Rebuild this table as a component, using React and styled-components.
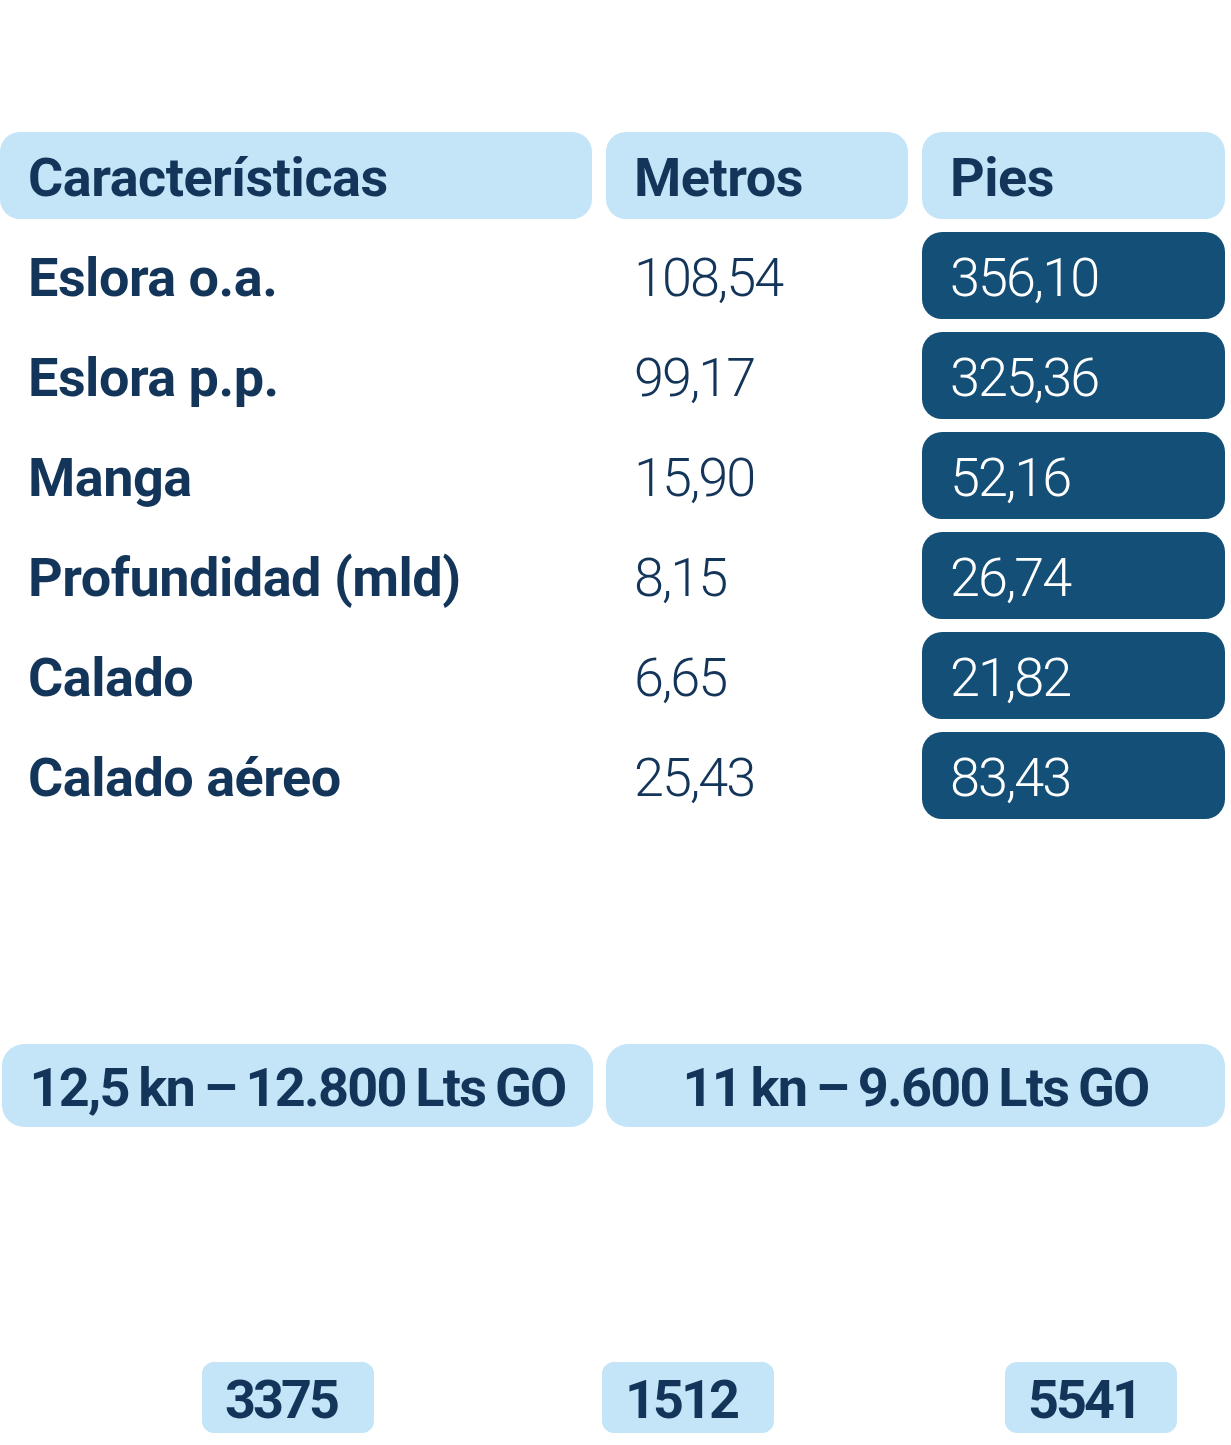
import React from 'react'
import styled, { createGlobalStyle } from 'styled-components'

const Global = createGlobalStyle`
  body {
    margin: 0;
    background: #fff;
    font-family: Roboto, "Noto Sans", sans-serif;
    color: #14355a;
  }
`

const Page = styled.div`
  width: 1231px;
  padding-top: 132px;
`

const Table = styled.div`
  display: grid;
  grid-template-columns: 592px 302px 303px;
  grid-auto-rows: 87px;
  column-gap: 14px;
  row-gap: 13px;
`

const Cell = styled.div`
  display: flex;
  align-items: center;
  padding: 3px 0 0 28px;
  border-radius: 20px;
  font-size: 54px;
  letter-spacing: ${p => (p.$light ? -2 : -0.5)}px;
  white-space: nowrap;
  background: ${p =>
    p.$variant === 'head' ? '#c4e4f7' : p.$variant === 'dark' ? '#134f76' : 'transparent'};
  color: ${p => (p.$variant === 'dark' ? '#fff' : '#14355a')};
  font-weight: ${p => (p.$light ? 300 : 700)};
`

const Speeds = styled.div`
  display: grid;
  grid-template-columns: 591px 619px;
  column-gap: 13px;
  margin: 225px 0 0 2px;
`

const Speed = styled.div`
  height: 83px;
  padding-top: 3px;
  box-sizing: border-box;
  display: flex;
  align-items: center;
  justify-content: center;
  background: #c4e4f7;
  border-radius: 22px;
  font-size: 54px;
  font-weight: 700;
  letter-spacing: -1.75px;
  word-spacing: -2px;
  white-space: nowrap;
`

const Badges = styled.div`
  display: grid;
  grid-template-columns: 400px 403px 172px;
  margin: 235px 0 0 202px;
`

const Badge = styled.div`
  width: 172px;
  height: 71px;
  box-sizing: border-box;
  padding: 3px 0 0 23px;
  display: flex;
  align-items: center;
  background: #c4e4f7;
  border-radius: 12px;
  font-size: 54px;
  font-weight: 700;
  letter-spacing: -3px;
`

const rows = [
  ['Eslora o.a.', '108,54', '356,10'],
  ['Eslora p.p.', '99,17', '325,36'],
  ['Manga', '15,90', '52,16'],
  ['Profundidad (mld)', '8,15', '26,74'],
  ['Calado', '6,65', '21,82'],
  ['Calado aéreo', '25,43', '83,43'],
]

export default function App() {
  return (
    <Page>
      <Global />
      <Table>
        <Cell $variant="head">Características</Cell>
        <Cell $variant="head">Metros</Cell>
        <Cell $variant="head">Pies</Cell>
        {rows.map(([name, m, ft]) => (
          <React.Fragment key={name}>
            <Cell>{name}</Cell>
            <Cell $light>{m}</Cell>
            <Cell $variant="dark" $light>{ft}</Cell>
          </React.Fragment>
        ))}
      </Table>
      <Speeds>
        <Speed>12,5 kn – 12.800 Lts GO</Speed>
        <Speed>11 kn – 9.600 Lts GO</Speed>
      </Speeds>
      <Badges>
        <Badge>3375</Badge>
        <Badge>1512</Badge>
        <Badge>5541</Badge>
      </Badges>
    </Page>
  )
}
